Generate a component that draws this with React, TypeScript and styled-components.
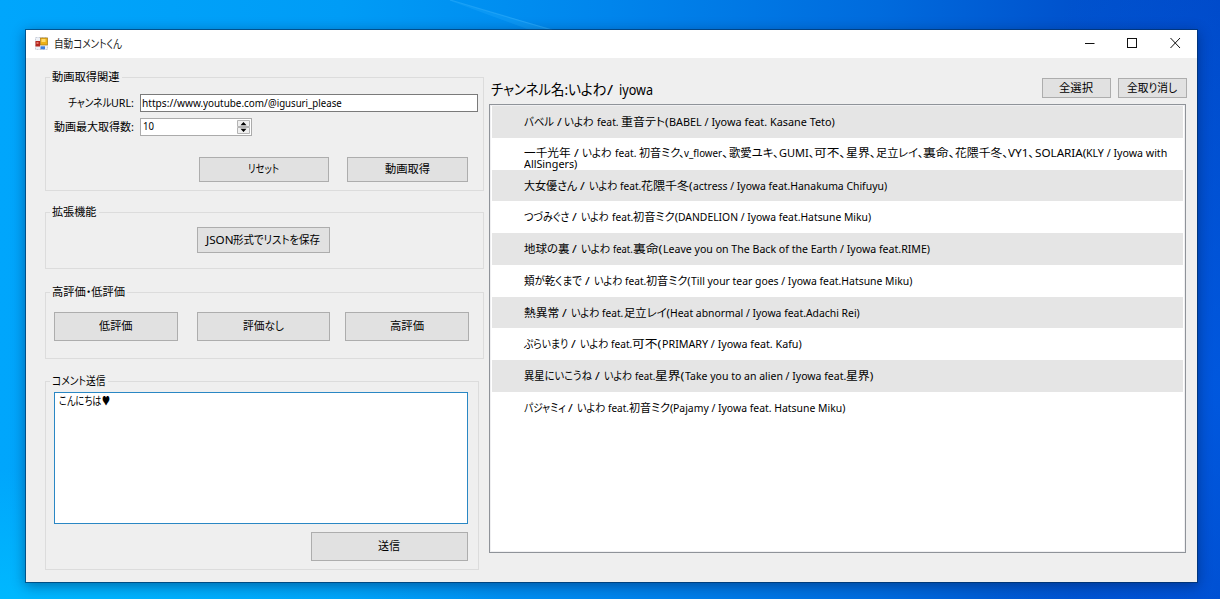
import React, { useLayoutEffect, useRef } from 'react';
import styled, { createGlobalStyle } from 'styled-components';

const GlobalStyle = createGlobalStyle`
  * { box-sizing: border-box; }
  html, body { margin: 0; padding: 0; }
  body {
    width: 1220px;
    height: 599px;
    overflow: hidden;
    color: #000;
    font-family: 'Noto Sans', 'Noto Sans CJK JP', 'DejaVu Sans', sans-serif;
    font-size: 11.4px;
    line-height: 13px;
    font-feature-settings: 'palt';
  }
`;

/* Text is split in runs; each run is condensed to its own width. */
type Run = [text: string, width: number];

const MAX_STRETCH = 1.12;

const RunBox = styled.span<{ $width: number }>`
  display: block;
  flex: none;
  width: ${(p) => p.$width}px;
`;

const RunInk = styled.span`
  display: inline-block;
  vertical-align: top;
  white-space: pre;
  transform-origin: 0 50%;
`;

const Line = styled.span<{ $lineHeight?: number }>`
  display: flex;
  line-height: ${(p) => p.$lineHeight ?? 13}px;
`;

function Fitted({ text, width }: { text: string; width: number }) {
  const ref = useRef<HTMLSpanElement>(null);
  useLayoutEffect(() => {
    const el = ref.current;
    if (!el) return;
    el.style.transform = 'none';
    const natural = el.getBoundingClientRect().width;
    if (natural > 0) el.style.transform = `scaleX(${Math.min(MAX_STRETCH, width / natural)})`;
  }, [text, width]);
  return (
    <RunBox $width={width}>
      <RunInk ref={ref}>{text}</RunInk>
    </RunBox>
  );
}

function Text({ runs, lineHeight }: { runs: Run[]; lineHeight?: number }) {
  return (
    <Line $lineHeight={lineHeight}>
      {runs.map(([text, width], i) => (
        <Fitted key={i} text={text} width={width} />
      ))}
    </Line>
  );
}

const Desktop = styled.div`
  width: 1220px;
  height: 599px;
  padding: 30px 23px 17px 26px;
  background:
    radial-gradient(ellipse 500px 130px at 0 100%, rgba(0, 190, 255, 0.75), transparent),
    radial-gradient(ellipse 260px 480px at 100% 65%, rgba(0, 94, 232, 0.7), transparent),
    linear-gradient(90deg, #00a6fc 0, #009cf6 28%, #0085ec 50%, #006bdd 72%, #0052cd 88%, #0048c6 100%);
`;

const Streak = styled.svg`
  position: absolute;
  left: 430px;
  top: 0;
`;

const Window = styled.main`
  position: relative;
  display: flex;
  flex-direction: column;
  width: 1171px;
  height: 552px;
  background: #efefef;
  box-shadow: 0 0 0 1px rgba(0, 45, 90, 0.6), 0 3px 12px 1px rgba(0, 25, 70, 0.45);
`;

const TitleBar = styled.header`
  display: flex;
  align-items: center;
  height: 28px;
  padding: 0 15px 2px 9px;
  background: #fff;
  color: #1c1c1c;
`;

const AppIcon = styled.svg`
  margin-right: 6px;
`;

const WindowControls = styled.div`
  display: flex;
  align-items: center;
  gap: 30px;
  margin-left: auto;
`;

const Body = styled.div`
  display: flex;
  gap: 5px;
  padding: 19px 0 0 19px;
`;

const LeftColumn = styled.div`
  width: 439px;
`;

const Group = styled.section<{ $height: number; $top?: number; $width?: number }>`
  width: ${(p) => p.$width ?? 439}px;
  height: ${(p) => p.$height}px;
  margin-top: ${(p) => p.$top ?? 0}px;
  border: 1px solid #dcdcdc;
`;

const Legend = styled.h2`
  width: max-content;
  height: 14px;
  margin: -8px 0 0 4px;
  padding: 0 2px;
  background: #efefef;
  font: inherit;
`;

const Form = styled.div`
  display: grid;
  grid-template-columns: 88px 338px;
  column-gap: 6px;
  row-gap: 6px;
  margin-top: 10px;
`;

const FieldLabel = styled.label`
  display: flex;
  align-items: center;
  justify-content: flex-end;
  height: 18px;
  padding-bottom: 2px;
`;

const UrlField = styled.div`
  display: flex;
  align-items: center;
  height: 18px;
  padding: 0 0 2px 1px;
  border: 1px solid #7a7a7a;
  background: #fff;
`;

const NumberField = styled.div`
  display: flex;
  align-items: center;
  justify-content: space-between;
  width: 112px;
  height: 18px;
  padding: 0 1px 0 2px;
  border: 1px solid #ababab;
  background: #fff;
`;

const NumberValue = styled.div`
  padding-bottom: 3px;
`;

const ButtonRow = styled.div<{ $top: number; $left: number; $gap?: number }>`
  display: flex;
  gap: ${(p) => p.$gap ?? 0}px;
  margin: ${(p) => p.$top}px 0 0 ${(p) => p.$left}px;
`;

const Button = styled.button<{ $width: number; $height: number }>`
  display: flex;
  flex: none;
  align-items: center;
  justify-content: center;
  width: ${(p) => p.$width}px;
  height: ${(p) => p.$height}px;
  padding: 0 1px 2px 0;
  border: 1px solid #adadad;
  background: #e1e1e1;
  color: inherit;
  font: inherit;
  font-feature-settings: inherit;
`;

const CommentBox = styled.div`
  width: 414px;
  height: 132px;
  margin: 4px 0 0 8px;
  padding: 1px 4px;
  border: 1px solid #2a87c4;
  background: #fff;
`;

const RightColumn = styled.div`
  width: 698px;
`;

const ListHeader = styled.div`
  display: flex;
  gap: 7px;
  height: 21px;
  margin-top: 1px;
`;

const ChannelName = styled.h1`
  flex: 1;
  margin: 0;
  padding: 3px 0 0 2px;
  font-size: 14.6px;
  font-weight: 400;
`;

const VideoList = styled.div`
  width: 697px;
  height: 449px;
  margin-top: 5px;
  padding: 1px;
  border: 1px solid #8f9399;
  background: #fff;
  box-shadow: inset 0 0 0 1px #f0f0f2;
`;

const VideoRow = styled.div<{ $shaded: boolean }>`
  display: flex;
  flex-direction: column;
  height: 31.75px;
  margin: 0 1px;
  padding: 9px 0 0 32px;
  background: ${(p) => (p.$shaded ? '#e5e5e5' : '#fff')};
`;

const videos: Run[][][] = [
  [[['バベル ', 32.7], ['/', 7.6], ['いよわ ', 32.4], ['feat. ', 24.3], ['重音テト(', 47.7], ['BABEL / Iyowa feat. Kasane Teto)', 165.8]]],
  [
    [
      ['一千光年 ', 49.7], ['/ ', 8.7], ['いよわ ', 32.3], ['feat. ', 24], ['初音ミク、', 45.7], ['v_flower', 38], ['、', 7],
      ['歌愛ユキ、', 49.7], ['GUMI、', 35.3], ['可不、', 31.7], ['星界、', 29.7], ['足立レイ、', 47.3], ['裏命、', 32],
      ['花隈千冬、', 53.3], ['VY1、', 26.3], ['SOLARIA(', 51.3], ['KLY / Iyowa with', 81.3],
    ],
    [['AllSingers)', 53.3]],
  ],
  [[['大女優さん ', 56], ['/ ', 9], ['いよわ ', 31], ['feat.', 21.3], ['花隈千冬(', 51.7], ['actress / Iyowa feat.Hanakuma Chifuyu)', 194]]],
  [[['つづみぐさ ', 48], ['/ ', 9.3], ['いよわ ', 30.3], ['feat.', 21.3], ['初音ミク(', 45], ['DANDELION / Iyowa feat.Hatsune Miku)', 193]]],
  [[['地球の裏 ', 48.3], ['/ ', 8.7], ['いよわ ', 32], ['feat.', 19.7], ['裏命(', 30], ['Leave you on The Back of the Earth / Iyowa feat.RIME)', 267]]],
  [[['頬が乾くまで ', 60.7], ['/ ', 9], ['いよわ ', 31], ['feat.', 21.3], ['初音ミク(', 44.7], ['Till your tear goes / Iyowa feat.Hatsune Miku)', 221.3]]],
  [[['熱異常 ', 38.3], ['/ ', 9], ['いよわ ', 31], ['feat.', 21.3], ['足立レイ(', 46], ['Heat abnormal / Iyowa feat.Adachi Rei)', 189.7]]],
  [[['ぷらいまり ', 46.7], ['/ ', 9.3], ['いよわ ', 31], ['feat.', 21.3], ['可不(', 29.3], ['PRIMARY / Iyowa feat. Kafu)', 139.7]]],
  [[['異星にいこうね ', 70.7], ['/ ', 9.3], ['いよわ ', 30.7], ['feat.', 20.3], ['星界(', 30], ['Take you to an alien / Iyowa feat.', 161.3], ['星界)', 27.3]]],
  [[['パジャミィ ', 44.3], ['/ ', 8.7], ['いよわ ', 31], ['feat.', 21], ['初音ミク(', 44.3], ['Pajamy / Iyowa feat. Hatsune Miku)', 172.3]]],
];

function FormIcon() {
  return (
    <AppIcon width="13" height="13" viewBox="0 0 13 13">
      <path d="M0.5 0.5H12.5V12.5H0.5Z" fill="#eef1f7" stroke="#c9ced8" strokeDasharray="2 1" />
      <rect x="0.5" y="4" width="4.5" height="5.5" fill="#b5261d" />
      <rect x="1.5" y="5" width="2" height="2" fill="#e2766a" />
      <rect x="5.5" y="1" width="7" height="7" fill="#eeb116" stroke="#a77a14" strokeWidth="0.7" />
      <rect x="6.5" y="2" width="4" height="3" fill="#ffdc6d" />
      <rect x="5.5" y="9.3" width="4.5" height="3" fill="#3c7fe0" />
    </AppIcon>
  );
}

function Spinner() {
  return (
    <svg width="13" height="14" viewBox="0 0 13 14">
      <path d="M0.5 0.5H12.5V6.5H0.5ZM0.5 7.5H12.5V13.5H0.5Z" fill="#efefef" stroke="#b4b4b4" />
      <path d="M3.5 5.2L6.5 2L9.5 5.2ZM3.5 8.8L6.5 12L9.5 8.8Z" fill="#000" />
    </svg>
  );
}

export default function App() {
  return (
    <>
      <GlobalStyle />
      <Desktop>
        <Streak width="140" height="30" viewBox="0 0 140 30">
          <path d="M18 0L125 30H100Z" fill="#33b4ff" opacity="0.22" />
          <path d="M20 0L122 30" stroke="#48bcff" strokeWidth="1.2" opacity="0.35" />
        </Streak>
        <Window>
          <TitleBar>
            <FormIcon />
            <Text runs={[['自動コメントくん', 68]]} />
            <WindowControls>
              <svg width="12" height="12" viewBox="0 0 12 12">
                <path d="M1 6.5H10.5" stroke="#111" />
              </svg>
              <svg width="12" height="12" viewBox="0 0 12 12">
                <rect x="1.5" y="1.5" width="9" height="9" fill="none" stroke="#111" />
              </svg>
              <svg width="14" height="12" viewBox="0 0 14 12">
                <path d="M2.5 1L12 11M12 1L2.5 11" stroke="#111" strokeWidth="1" />
              </svg>
            </WindowControls>
          </TitleBar>
          <Body>
            <LeftColumn>
              <Group $height={114}>
                <Legend><Text runs={[['動画取得関連', 67.5]]} /></Legend>
                <Form>
                  <FieldLabel><Text runs={[['チャンネル', 43.5], ['URL:', 23]]} /></FieldLabel>
                  <UrlField>
                    <Text runs={[['https://www.', 61.3], ['youtube.com/', 64.7], ['@igusuri_please', 73.7]]} />
                  </UrlField>
                  <FieldLabel><Text runs={[['動画最大取得数:', 80]]} /></FieldLabel>
                  <NumberField>
                    <NumberValue><Text runs={[['10', 11]]} lineHeight={11} /></NumberValue>
                    <Spinner />
                  </NumberField>
                </Form>
                <ButtonRow $top={21} $left={153} $gap={18}>
                  <Button $width={130} $height={25}><Text runs={[['リセット', 31]]} /></Button>
                  <Button $width={121} $height={25}><Text runs={[['動画取得', 45]]} /></Button>
                </ButtonRow>
              </Group>
              <Group $height={57} $top={21}>
                <Legend><Text runs={[['拡張機能', 44.5]]} /></Legend>
                <ButtonRow $top={8} $left={151}>
                  <Button $width={133} $height={26}>
                    <Text runs={[['JSON', 27.5], ['形式でリストを保存', 87]]} />
                  </Button>
                </ButtonRow>
              </Group>
              <Group $height={67} $top={23}>
                <Legend><Text runs={[['高評価・低評価', 73]]} /></Legend>
                <ButtonRow $top={13} $left={8}>
                  <Button $width={124} $height={29}><Text runs={[['低評価', 33.5]]} /></Button>
                  <ButtonRow $top={0} $left={19} $gap={15}>
                    <Button $width={133} $height={29}><Text runs={[['評価なし', 41]]} /></Button>
                    <Button $width={124} $height={29}><Text runs={[['高評価', 34]]} /></Button>
                  </ButtonRow>
                </ButtonRow>
              </Group>
              <Group $height={189} $top={22} $width={434}>
                <Legend><Text runs={[['コメント送信', 53.5]]} /></Legend>
                <CommentBox><Text runs={[['こんにちは', 42.5], ['♥', 8]]} /></CommentBox>
                <ButtonRow $top={8} $left={265}>
                  <Button $width={157} $height={29}><Text runs={[['送信', 22]]} /></Button>
                </ButtonRow>
              </Group>
            </LeftColumn>
            <RightColumn>
              <ListHeader>
                <ChannelName>
                  <Text runs={[['チャンネル名:', 77], ['いよわ', 38.5], ['/ ', 12], ['iyowa', 34]]} lineHeight={17} />
                </ChannelName>
                <Button $width={69} $height={20}><Text runs={[['全選択', 34]]} /></Button>
                <Button $width={69} $height={20}><Text runs={[['全取り消し', 50]]} /></Button>
              </ListHeader>
              <VideoList>
                {videos.map((lines, i) => (
                  <VideoRow key={i} $shaded={i % 2 === 0}>
                    {lines.map((runs, j) => (
                      <Text key={j} runs={runs} lineHeight={lines.length === 1 ? 13 : 11} />
                    ))}
                  </VideoRow>
                ))}
              </VideoList>
            </RightColumn>
          </Body>
        </Window>
      </Desktop>
    </>
  );
}
